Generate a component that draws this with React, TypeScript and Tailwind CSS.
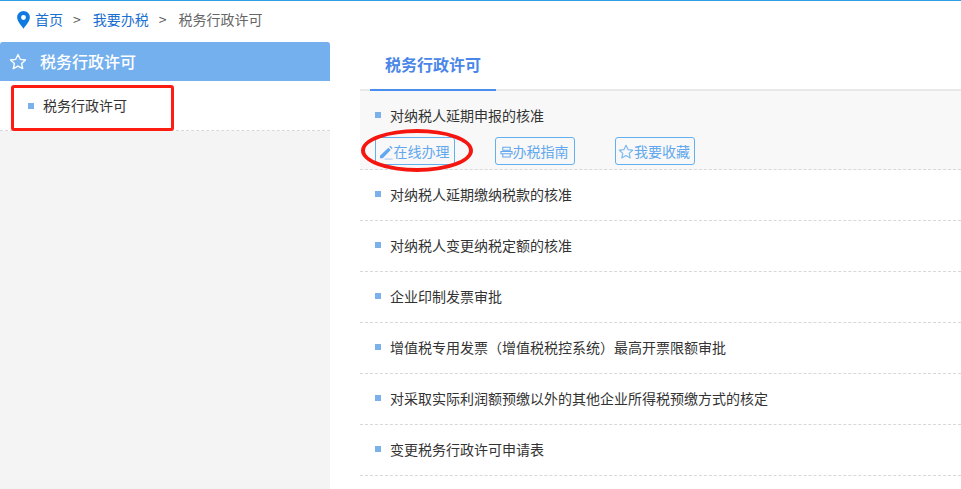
const cjk = "font-['Microsoft_YaHei','Noto_Sans_CJK_SC',sans-serif]";

const rows = [
  "对纳税人延期缴纳税款的核准",
  "对纳税人变更纳税定额的核准",
  "企业印制发票审批",
  "增值税专用发票（增值税税控系统）最高开票限额审批",
  "对采取实际利润额预缴以外的其他企业所得税预缴方式的核定",
  "变更税务行政许可申请表",
];

function Bullet() {
  return <span className="block w-[6px] h-[6px] bg-[#7ab1ea] shrink-0" />;
}

function Star({ cls }: { cls: string }) {
  return (
    <svg viewBox="0 0 24 24" className={cls} fill="none" stroke="currentColor" strokeWidth="1.800" strokeLinejoin="round">
      <path d="M12 2l3 6.400 7 .9-5.200 4.700 1.500 6.900-6.300-3.500-6.300 3.500 1.500-6.900L2 9.300l7-.9z" />
    </svg>
  );
}

function Btn({ icon, label }: { icon: React.ReactNode; label: string }) {
  return (
    <div className="w-[80px] h-[28px] border border-[#62b0f0] rounded-[3px] flex items-center justify-center pr-[2px] text-[14px] text-[#62a8ee]">
      {icon}
      <span>{label}</span>
    </div>
  );
}

export default function App() {
  return (
    <div className={`relative w-[961px] h-[489px] overflow-hidden bg-white ${cjk}`}>
      <div className="h-px bg-[#2f9fe8]" />
      <div className="h-[41px] flex items-center pl-[16px] pb-[4px] text-[14px]">
        <svg viewBox="0 0 16 22" className="w-[15px] h-[20px] mr-[4px]">
          <path fillRule="evenodd" fill="#0f7be0" d="M8 1a7 7 0 0 0-7 7c0 4.600 5 9.700 7 12.500 2-2.800 7-7.900 7-12.500a7 7 0 0 0-7-7zm0 4.500a2.700 2.700 0 1 1 0 5.400 2.700 2.700 0 0 1 0-5.400z" />
        </svg>
        <span className="text-[#1a6fd0]">首页</span>
        <span className="text-[#555] ml-[10px]">&gt;</span>
        <span className="text-[#1a6fd0] ml-[12px]">我要办税</span>
        <span className="text-[#555] ml-[10px]">&gt;</span>
        <span className="text-[#666] ml-[12px]">税务行政许可</span>
      </div>
      <div className="flex h-[447px]">
        <aside className="w-[330px] bg-[#f4f4f4] shrink-0">
          <div className="h-[39px] bg-[#74b0ee] rounded-t-[3px] flex items-center pl-[9px] pb-[2px] text-white text-[16px] font-medium">
            <Star cls="w-[18px] h-[18px] mr-[13px] mt-[3px]" />
            <span>税务行政许可</span>
          </div>
          <div className="h-[50px] bg-white border-b border-dashed border-[#d8d8d8] flex items-center pl-[28px] text-[14px] text-[#333]">
            <Bullet />
            <span className="ml-[9px] -mt-[1px]">税务行政许可</span>
          </div>
        </aside>
        <main className="flex-1 pl-[30px]">
          <div className="h-[49px] border-b-2 border-[#e8e8e8] pl-[10px]">
            <div className="w-[126px] h-[49px] border-b-[2px] border-[#4a8eee] flex items-center justify-center text-[16px] font-bold text-[#4a86e8]">
              <span className="-mt-[3px]">税务行政许可</span>
            </div>
          </div>
          <div className="h-[79px] bg-[#f8f8f8] border-b border-dashed border-[#d8d8d8] pl-[15px] pt-[15px]">
            <div className="flex items-center h-[18px] text-[14px] text-[#333]">
              <Bullet />
              <span className="ml-[9px]">对纳税人延期申报的核准</span>
            </div>
            <div className="flex mt-[13px] gap-[40px]">
              <Btn
                label="在线办理"
                icon={
                  <svg viewBox="0 0 16 16" className="w-[15px] h-[15px] mt-[2px]" fill="#62a8ee">
                    <path d="M1 11.500L10 2.800l2.500 2.500L4 14H1zM11 1.800l1-1 2.500 2.500-1 1z" />
                    <path d="M6 14.500h8.500v1H6z" opacity=".6" />
                  </svg>
                }
              />
              <Btn
                label="办税指南"
                icon={
                  <svg viewBox="0 0 14 14" className="w-[13px] h-[14px] mt-[2px]" fill="none" stroke="#62a8ee" strokeWidth="1.100">
                    <path d="M3 2h8v3H3zM1 6.500h12v2.500H1zM3 9v3.500h8V9" />
                  </svg>
                }
              />
              <Btn label="我要收藏" icon={<Star cls="w-[16px] h-[16px] shrink-0 mt-[2px] text-[#7cbaf2]" />} />
            </div>
          </div>
          {rows.map((t) => (
            <div key={t} className="h-[51px] border-b border-dashed border-[#d8d8d8] pl-[15px] pb-[2px] flex items-center text-[14px] text-[#333]">
              <Bullet />
              <span className="ml-[9px]">{t}</span>
            </div>
          ))}
        </main>
      </div>
      <div className="absolute left-[11px] top-[85px] w-[163px] h-[46px] border-[3px] border-[#ff1c10] rounded-[3px]" />
      <div className="absolute left-[361px] top-[129px] w-[112px] h-[43px] border-[4px] border-[#f5170f] rounded-[50%]" />
    </div>
  );
}
